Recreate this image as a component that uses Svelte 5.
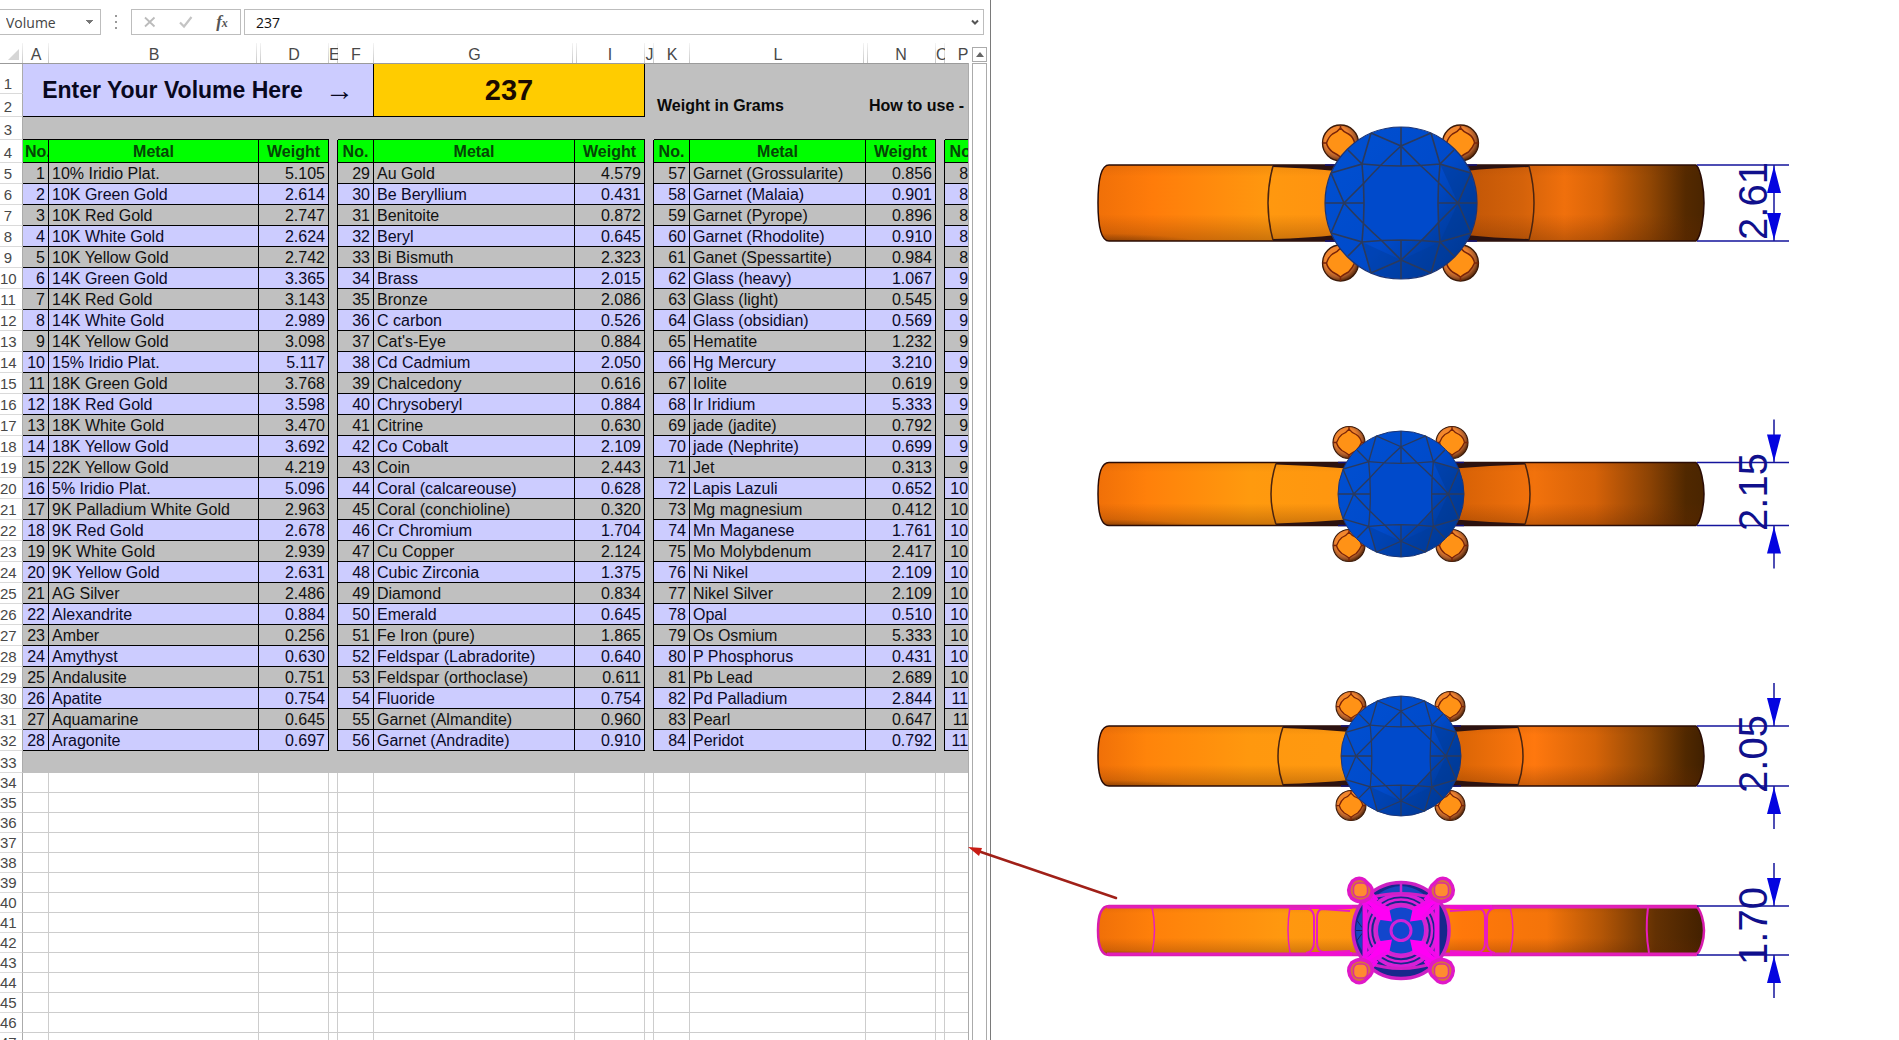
<script lang="ts">
  type Entry = [string, string];

  const firstMetals: Entry[] = [
    ["10% Iridio Plat.", "5.105"], ["10K Green Gold", "2.614"], ["10K Red Gold", "2.747"], ["10K White Gold", "2.624"],
    ["10K Yellow Gold", "2.742"], ["14K Green Gold", "3.365"], ["14K Red Gold", "3.143"], ["14K White Gold", "2.989"],
    ["14K Yellow Gold", "3.098"], ["15% Iridio Plat.", "5.117"], ["18K Green Gold", "3.768"], ["18K Red Gold", "3.598"],
    ["18K White Gold", "3.470"], ["18K Yellow Gold", "3.692"], ["22K Yellow Gold", "4.219"], ["5% Iridio Plat.", "5.096"],
    ["9K Palladium White Gold", "2.963"], ["9K Red Gold", "2.678"], ["9K White Gold", "2.939"], ["9K Yellow Gold", "2.631"],
    ["AG Silver", "2.486"], ["Alexandrite", "0.884"], ["Amber", "0.256"], ["Amythyst", "0.630"],
    ["Andalusite", "0.751"], ["Apatite", "0.754"], ["Aquamarine", "0.645"], ["Aragonite", "0.697"]
  ];
  const secondMetals: Entry[] = [
    ["Au Gold", "4.579"], ["Be Beryllium", "0.431"], ["Benitoite", "0.872"], ["Beryl", "0.645"],
    ["Bi Bismuth", "2.323"], ["Brass", "2.015"], ["Bronze", "2.086"], ["C carbon", "0.526"],
    ["Cat's-Eye", "0.884"], ["Cd Cadmium", "2.050"], ["Chalcedony", "0.616"], ["Chrysoberyl", "0.884"],
    ["Citrine", "0.630"], ["Co Cobalt", "2.109"], ["Coin", "2.443"], ["Coral (calcareouse)", "0.628"],
    ["Coral (conchioline)", "0.320"], ["Cr Chromium", "1.704"], ["Cu Copper", "2.124"], ["Cubic Zirconia", "1.375"],
    ["Diamond", "0.834"], ["Emerald", "0.645"], ["Fe Iron (pure)", "1.865"], ["Feldspar (Labradorite)", "0.640"],
    ["Feldspar (orthoclase)", "0.611"], ["Fluoride", "0.754"], ["Garnet (Almandite)", "0.960"], ["Garnet (Andradite)", "0.910"]
  ];
  const thirdMetals: Entry[] = [
    ["Garnet (Grossularite)", "0.856"], ["Garnet (Malaia)", "0.901"], ["Garnet (Pyrope)", "0.896"], ["Garnet (Rhodolite)", "0.910"],
    ["Ganet (Spessartite)", "0.984"], ["Glass (heavy)", "1.067"], ["Glass (light)", "0.545"], ["Glass (obsidian)", "0.569"],
    ["Hematite", "1.232"], ["Hg Mercury", "3.210"], ["Iolite", "0.619"], ["Ir Iridium", "5.333"],
    ["jade (jadite)", "0.792"], ["jade (Nephrite)", "0.699"], ["Jet", "0.313"], ["Lapis Lazuli", "0.652"],
    ["Mg magnesium", "0.412"], ["Mn Maganese", "1.761"], ["Mo Molybdenum", "2.417"], ["Ni Nikel", "2.109"],
    ["Nikel Silver", "2.109"], ["Opal", "0.510"], ["Os Osmium", "5.333"], ["P Phosphorus", "0.431"],
    ["Pb Lead", "2.689"], ["Pd Palladium", "2.844"], ["Pearl", "0.647"], ["Peridot", "0.792"]
  ];

  const letters = ["A", "B", "D", "E", "F", "G", "I", "J", "K", "L", "N", "O", "P"];
  const beforeHidden = ["B", "G", "L"];
  const afterHidden = ["D", "I", "N"];
  const emptyRows = Array.from({ length: 14 }, (_, i) => 34 + i);

  const cx = 1401;
  const corners = [[-1, -1], [1, -1], [-1, 1], [1, 1]];
  const quarters = [0, 90, 180, 270];

  const rings = [
    { id: "r1", size: "2.61", textY: 201, cy: 203, half: 38, stone: 76, prong: 60, prongR: 18, left: 1273, right: 1529, inward: true },
    { id: "r2", size: "2.15", textY: 492, cy: 494, half: 31.5, stone: 63, prong: 51.5, prongR: 16, left: 1276, right: 1525, inward: false },
    { id: "r3", size: "2.05", textY: 754, cy: 756, half: 30, stone: 60, prong: 49.5, prongR: 15, left: 1283, right: 1518, inward: false },
    { id: "r4", size: "1.70", textY: 926, cy: 930.5, half: 24.5, stone: 49, prong: 41, prongR: 12, left: 1290, right: 1510, inward: false }
  ];
  const solidRings = rings.slice(0, 3);
  const selected = rings[3];

  function bandPath(cy: number, half: number) {
    const t = cy - half;
    const b = cy + half;
    const k = half * 0.7;
    return `M1109 ${t}H1696C1701 ${t + 4} 1704 ${cy - k / 2} 1704 ${cy}S1701 ${b - 4} 1696 ${b}H1109`
      + `C1102 ${b} 1098 ${cy + k} 1098 ${cy}S1102 ${t} 1109 ${t}Z`;
  }
</script>

<main class="screen">
  <section class="workbook" aria-label="Workbook">
    <div class="formula-bar">
      <select class="name-box" aria-label="Name box">
        <option>Volume</option>
      </select>
      <svg class="grip" width="4" height="18" viewBox="0 0 4 18"><path d="M1 2h2v2H1zM1 8h2v2H1zM1 14h2v2H1z" fill="#999" /></svg>
      <div class="actions">
        <button aria-label="Cancel">
          <svg width="14" height="14" viewBox="0 0 14 14"><path d="M2 2.5l9.500 9M11.500 2.500L2 11.500" stroke="#bbb" stroke-width="1.800" fill="none" /></svg>
        </button>
        <button aria-label="Enter">
          <svg width="16" height="14" viewBox="0 0 16 14"><path d="M2 7.500l4 4L13.500 2" stroke="#c4c4c4" stroke-width="2.200" fill="none" /></svg>
        </button>
        <button class="fx" aria-label="Insert function"><i>f<small>x</small></i></button>
      </div>
      <div class="formula">
        <input aria-label="Formula" value="237" />
        <button aria-label="Expand formula bar">
          <svg width="8" height="7" viewBox="0 0 8 7"><path d="M1 1.500l3 3 3-3" stroke="#555" stroke-width="2" fill="none" /></svg>
        </button>
      </div>
    </div>

    <div class="sheet-area">
      <div class="sheet">
        <table>
          <colgroup>
            <col class="w-head" />
            <col class="w-a" /><col class="w-b" /><col class="w-weight" /><col class="w-gap" />
            <col class="w-no" /><col class="w-g" /><col class="w-weight" /><col class="w-gap" />
            <col class="w-no" /><col class="w-l" /><col class="w-weight" /><col class="w-gap" />
            <col class="w-no" />
          </colgroup>
          <thead>
            <tr class="letters">
              <th class="select-all"><svg width="12" height="12" viewBox="0 0 12 12"><path d="M11 0v11H0z" fill="#d6d6d6" /></svg></th>
              {#each letters as letter}
                <th class:before-hidden={beforeHidden.includes(letter)} class:after-hidden={afterHidden.includes(letter)}>{letter}</th>
              {/each}
            </tr>
          </thead>
          <tbody>
            <tr class="r-first">
              <th>1</th>
              <td class="prompt" colspan="5" rowspan="2"><div><span>Enter Your Volume Here</span><span class="arrow">→</span></div></td>
              <td class="volume" colspan="2" rowspan="2">237</td>
              <td class="fill" colspan="6"></td>
            </tr>
            <tr class="r-title">
              <th>2</th>
              <td class="fill"></td>
              <td class="fill note" colspan="2">Weight in Grams</td>
              <td class="fill note" colspan="3">How to use -</td>
            </tr>
            <tr class="r-title">
              <th>3</th>
              {#each letters as letter}
                <td class="fill" class:above-head={!["E", "J", "O"].includes(letter)}></td>
              {/each}
            </tr>
            <tr class="r-title table-head">
              <th>4</th>
              <th>No.</th><th>Metal</th><th>Weight</th><td class="gap"></td>
              <th>No.</th><th>Metal</th><th>Weight</th><td class="gap"></td>
              <th>No.</th><th>Metal</th><th>Weight</th><td class="gap"></td>
              <th>No.</th>
            </tr>
            {#each firstMetals as first, i}
              <tr class="item" class:even={i % 2 == 1}>
                <th>{i + 5}</th>
                <td class="num">{i + 1}</td><td>{first[0]}</td><td class="num">{first[1]}</td><td class="gap"></td>
                <td class="num">{i + 29}</td><td>{secondMetals[i][0]}</td><td class="num">{secondMetals[i][1]}</td><td class="gap"></td>
                <td class="num">{i + 57}</td><td>{thirdMetals[i][0]}</td><td class="num">{thirdMetals[i][1]}</td><td class="gap"></td>
                <td class="num">{i + 85}</td>
              </tr>
            {/each}
            <tr class="r-last">
              <th>33</th>
              <td class="fill" colspan="13"></td>
            </tr>
            {#each emptyRows as row}
              <tr class="blank">
                <th>{row}</th>
                {#each letters as _}<td></td>{/each}
              </tr>
            {/each}
          </tbody>
        </table>
      </div>
      <div class="scrollbar">
        <button aria-label="Scroll up">
          <svg width="8" height="5" viewBox="0 0 8 5"><path d="M0 5l4-5 4 5z" fill="#666" /></svg>
        </button>
        <div class="track"></div>
      </div>
    </div>
  </section>

  <section class="viewport" aria-label="Ring models">
    <svg class="scene" viewBox="991 0 908 1040">
      <defs>
        <linearGradient id="band-r1" gradientUnits="userSpaceOnUse" x1="1098" x2="1704" y1="0" y2="0">
          <stop offset="0" stop-color="#f07008" /><stop offset=".09" stop-color="#ff7c0a" /><stop offset=".28" stop-color="#ff980f" />
          <stop offset=".5" stop-color="#ff8e10" /><stop offset=".6" stop-color="#c05506" /><stop offset=".7" stop-color="#d4620a" />
          <stop offset=".77" stop-color="#f0700c" /><stop offset=".83" stop-color="#d86408" /><stop offset=".91" stop-color="#924704" /><stop offset=".97" stop-color="#542900" /><stop offset="1" stop-color="#4a2500" />
        </linearGradient>
        <linearGradient id="band-r2" gradientUnits="userSpaceOnUse" x1="1098" x2="1704" y1="0" y2="0">
          <stop offset="0" stop-color="#f07008" /><stop offset=".08" stop-color="#ff800a" /><stop offset=".25" stop-color="#ff9a0e" />
          <stop offset=".5" stop-color="#ff9410" /><stop offset=".6" stop-color="#d86206" /><stop offset=".72" stop-color="#f2720c" />
          <stop offset=".82" stop-color="#d66208" /><stop offset=".91" stop-color="#8c4304" /><stop offset=".97" stop-color="#502800" /><stop offset="1" stop-color="#4a2500" />
        </linearGradient>
        <linearGradient id="band-r3" gradientUnits="userSpaceOnUse" x1="1098" x2="1704" y1="0" y2="0">
          <stop offset="0" stop-color="#f07008" /><stop offset=".08" stop-color="#ff840a" /><stop offset=".25" stop-color="#ff980e" />
          <stop offset=".5" stop-color="#ff9a12" /><stop offset=".6" stop-color="#dc6606" /><stop offset=".72" stop-color="#ff780e" />
          <stop offset=".82" stop-color="#d66408" /><stop offset=".91" stop-color="#8c4604" /><stop offset=".97" stop-color="#502800" /><stop offset="1" stop-color="#402000" />
        </linearGradient>
        <linearGradient id="band-r4" gradientUnits="userSpaceOnUse" x1="1098" x2="1704" y1="0" y2="0">
          <stop offset="0" stop-color="#f07008" /><stop offset=".09" stop-color="#ff800a" /><stop offset=".3" stop-color="#ff980f" />
          <stop offset=".5" stop-color="#ff9410" /><stop offset=".6" stop-color="#ff780a" /><stop offset=".74" stop-color="#f4740a" />
          <stop offset=".83" stop-color="#b45606" /><stop offset=".92" stop-color="#633103" /><stop offset="1" stop-color="#422000" />
        </linearGradient>
        <linearGradient id="floor" x1="0" x2="0" y1="0" y2="1">
          <stop offset="0" stop-color="#6a2800" stop-opacity=".1" /><stop offset=".15" stop-color="#6a2800" stop-opacity="0" />
          <stop offset=".65" stop-color="#6a2800" stop-opacity="0" /><stop offset="1" stop-color="#5a2500" stop-opacity=".32" />
        </linearGradient>
        <radialGradient id="heel" cx="0" cy="1.1" r=".2">
          <stop offset="0" stop-color="#301400" stop-opacity=".7" /><stop offset="1" stop-color="#301400" stop-opacity="0" />
        </radialGradient>
        <radialGradient id="prong" cx=".42" cy=".4" r=".62">
          <stop offset="0" stop-color="#ff9a1c" /><stop offset=".55" stop-color="#f08430" /><stop offset=".8" stop-color="#a85a2a" /><stop offset="1" stop-color="#502408" />
        </radialGradient>
        <linearGradient id="gem" x1="0" x2="1" y1=".1" y2=".9">
          <stop offset="0" stop-color="#0050d2" /><stop offset=".55" stop-color="#004aca" /><stop offset=".78" stop-color="#003ea4" /><stop offset="1" stop-color="#00368c" />
        </linearGradient>
      </defs>

      {#each rings as ring}
        <path d={bandPath(ring.cy, ring.half)} fill="url(#band-{ring.id})" />
        <path d={bandPath(ring.cy, ring.half)} fill="url(#floor)" />
        <path d={bandPath(ring.cy, ring.half)} fill="url(#heel)" stroke={ring === selected ? "#d81cae" : "#2a0c06"} stroke-width={ring === selected ? 2.5 : 1.5} />
      {/each}

      {#each solidRings as ring}
        {@const t = ring.cy - ring.half}
        {@const b = ring.cy + ring.half}
        {@const s = ring.stone}
        <!-- dark wedges where the shoulders taper under the stone -->
        <g fill="#2c1210">
          <path d="M{ring.left} {t}H{cx - s * 0.85}V{t + 6}Q{ring.left + 35} {t + 3} {ring.left} {t + 2}Z" />
          <path d="M{ring.left} {b}H{cx - s * 0.85}V{b - 6}Q{ring.left + 35} {b - 3} {ring.left} {b - 2}Z" />
          <path d="M{ring.right} {t}H{cx + s * 0.85}V{t + 6}Q{ring.right - 35} {t + 3} {ring.right} {t + 2}Z" />
          <path d="M{ring.right} {b}H{cx + s * 0.85}V{b - 6}Q{ring.right - 35} {b - 3} {ring.right} {b - 2}Z" />
        </g>
        <g fill="none" stroke="#4a2410" stroke-width="1.5">
          <path d="M{ring.left} {t + 1}Q{ring.left - 10} {ring.cy} {ring.left} {b - 1}" />
          <path d="M{ring.right} {t + 1}Q{ring.right + 10} {ring.cy} {ring.right} {b - 1}" />
        </g>
        <path d="M{cx - s} {t}H{cx + s}M{cx - s} {b}H{cx + s}" stroke="#10107a" stroke-width="1.5" />
        {#each corners as [dx, dy]}
          <g transform="translate({cx - 0.5 + dx * ring.prong} {ring.cy + dy * ring.prong}) scale({ring.prongR / 18})">
            <circle r="18" fill="url(#prong)" stroke="#3c1a08" stroke-width="1.3" />
            <path d="M0-15Q3-11 8-9Q13-6 14 0Q12 5 8 9Q4 11 0 14Q-4 11-8 9Q-13 5-14 0Q-12-6-8-9Q-3-11 0-15Z" fill="#ff9216" stroke="#7a2408" stroke-width="1.5" />
            <path d="M0-18v3M0 18v-4M-18 0h4M18 0h-4" stroke="#7a2408" stroke-width="1.5" />
          </g>
        {/each}
        <g transform="translate({cx} {ring.cy}) scale({s / 76})">
          <circle r="76" fill="url(#gem)" stroke="#1c3474" stroke-width="1.2" />
          <path d="M57 0L39 39L70 30L76 0L70-30L39-39Z" fill="#003a94" opacity=".5" />
          <path d="M0 57L39 39L53 53L30 70L0 76L-30 70L-39 39Z" fill="#003c9c" opacity=".45" />
          <path d="M-37-20L-20-37H20L37-20V20L20 37H-20L-37 20Z" fill="#004acb" />
          <g fill="none" stroke="#2b3a5c" stroke-width="1.6">
            {#each quarters as angle}
              <path transform="rotate({angle})" d="M0-76V-37M0-57Q-22-37-37-20Q-46-11-57 0M-39-39Q0-35 39-39M0-57L-30-70M0-57L30-70M30-70L39-39L70-30M39-39L53-53" />
            {/each}
          </g>
        </g>
      {/each}

      <!-- selected ring -->
      <g fill="none" stroke="#e81cc0" stroke-width="2">
        <path d="M1107 907H1697M1107 954H1697" stroke="#e020b8" stroke-width="3" />
        <path d="M1152 907Q1157 930 1152 953" stroke-width="1.500" />
        <path d="M1290 907Q1286 930 1290 953" stroke-width="1.500" />
        <path d="M1290 909H1308Q1314 910 1314 918V942Q1314 952 1306 953" />
        <path d="M1350 911L1322 909Q1317 910 1317 918V942Q1317 952 1324 952L1350 951" />
        <path d="M1450 911L1480 909Q1485 910 1485 918V942Q1485 952 1478 952L1450 951" />
        <path d="M1510 908H1494Q1487 910 1487 918V942Q1487 952 1495 953" />
        <path d="M1510 907Q1516 930 1510 953" stroke-width="1.500" />
        <path d="M1648 907Q1645 930 1649 953" />
        <path d="M1310 907H1352M1310 954H1352M1450 907H1492M1450 954H1492" stroke="#f010d0" stroke-width="4" />
      </g>
      <g transform="translate({cx} 930.5)">
        <circle r="48" fill="#16288c" stroke="#cc20c4" stroke-width="3.500" />
        <path d="M-22-37Q0-52 22-37L20-33Q0-40-20-33Z" fill="#1746c0" />
        <path d="M-39-20Q-51 0-39 20Z" fill="#1648c0" />
        <path d="M-45 0H-38M-44-10L-39-3M-44 10L-39 3" stroke="#15206c" />
        <g fill="none">
          <circle r="36" stroke="#d820d8" stroke-width="4" />
          <circle r="31" stroke="#e020d8" stroke-width="2.500" />
          <circle r="26" stroke="#d428cc" stroke-width="3.500" />
          <path d="M-36-30V30M36-30V30" stroke="#f010e8" stroke-width="5" />
          <path d="M-34 32Q0 44 34 32M-34-32Q0-42 34-32" stroke="#d020c8" stroke-width="3" />
          <path d="M0-48V-35" stroke="#cc24d0" stroke-width="2.500" />
        </g>
        <circle r="24" fill="#1246cc" stroke="#d022d8" stroke-width="2" />
        <!-- claw bases crossing the rings -->
        {#each corners as [dx, dy]}
          <g transform="scale({dx} {dy})">
            <path d="M9 9L12 23L22 27L34 36L38 30L28 22L24 11Z" fill="#ff00f4" />
            <path d="M14 22L36 34M22 13L38 28M24 30L32 40" stroke="#f408ec" stroke-width="4" />
          </g>
        {/each}
        <circle r="10" fill="#1246d0" stroke="#d022d8" stroke-width="3" />
      </g>
      {#each corners as [dx, dy]}
        <g transform="translate({cx + dx * 40.5} {930.5 + dy * 40.500}) scale({dx} {dy})">
          <path d="M-10 4Q-14-1-9-8Q0-15 9-8Q15 0 8 9Q2 14-4 10Z" fill="#d87040" stroke="#e018c8" stroke-width="3.500" />
          <rect x="-7" y="-7" width="14" height="14" rx="5" fill="#ff8c30" stroke="#d8309c" stroke-width="1.500" />
        </g>
      {/each}

      <!-- dimensions -->
      {#each rings as ring}
        {@const t = ring.cy - ring.half}
        {@const b = ring.cy + ring.half}
        <path d="M1697 {t}H1789M1697 {b}H1789" stroke="#14149c" stroke-width="1.5" />
        {#if ring.inward}
          <path d="M1774 {t}V{b}" stroke="#14149c" stroke-width="1.5" />
          <path d="M1774 {t + 1}L1781 {t + 28}H1767ZM1774 {b - 1}L1781 {b - 28}H1767Z" fill="#0404e0" />
        {:else}
          <path d="M1774 {t - 43}V{t}M1774 {b}V{b + 43}" stroke="#14149c" stroke-width="1.5" />
          <path d="M1774 {t - 1}L1781 {t - 28}H1767ZM1774 {b + 1}L1781 {b + 28}H1767Z" fill="#0404e0" />
        {/if}
        <text class="dimension" transform="translate(1767 {ring.textY}) rotate(-90)">{ring.size}</text>
      {/each}

      <path d="M1116 898L978 851" stroke="#a02018" stroke-width="2.500" stroke-linecap="round" />
      <path d="M968 847L982 848L979 856Z" fill="#c81c14" />
    </svg>
  </section>
</main>

<style>
  :global(body) {
    background: #fff;
    overflow: hidden;
  }
  .screen {
    display: flex;
    height: 100vh;
    overflow: hidden;
    font-family: "Liberation Sans", Arial, sans-serif;
    font-size: 16px;
  }
  .workbook {
    flex: none;
    display: flex;
    flex-direction: column;
    border-right: 1px solid #7a7a7a;
  }
  button {
    display: flex;
    align-items: center;
    justify-content: center;
    border: 0;
    padding: 0;
    background: none;
  }

  .formula-bar {
    display: flex;
    height: 26px;
    padding: 9px 6px 8px 0;
  }
  .name-box, .formula input {
    font: 14px "Open Sans", "Noto Sans", sans-serif;
    color: #444;
  }
  .name-box {
    appearance: none;
    width: 101px;
    border: 1px solid #bdbdbd;
    border-left: 0;
    border-radius: 0;
    padding: 0 6px;
    background-color: #fff;
    background-image: linear-gradient(to bottom left, #777 50%, transparent 50%), linear-gradient(to bottom right, #777 50%, transparent 50%);
    background-size: 4px 4px;
    background-position: 86px 10px, 90px 10px;
    background-repeat: no-repeat;
  }
  .grip {
    margin: 4px 13px;
  }
  .actions {
    display: grid;
    grid-template-columns: repeat(3, 1fr);
    width: 110px;
    border: 1px solid #bdbdbd;
    box-sizing: border-box;
  }
  .fx {
    font: bold 17px "Liberation Serif", serif;
    color: #555;
  }
  .fx small {
    font-size: 12px;
  }
  .formula {
    flex: 1;
    display: flex;
    margin-left: 3px;
    border: 1px solid #bdbdbd;
  }
  .formula input {
    flex: 1;
    border: 0;
    padding: 0 11px;
    color: #111;
  }
  .formula button {
    width: 16px;
  }

  .sheet-area {
    display: flex;
  }
  .sheet {
    width: 968px;
    overflow: hidden;
  }
  table {
    width: 981px;
    table-layout: fixed;
    border-collapse: separate;
    border-spacing: 0;
  }
  .w-head { width: 23px; }
  .w-a { width: 26px; }
  .w-b { width: 210px; }
  .w-weight { width: 70px; }
  .w-gap { width: 9px; }
  .w-no { width: 36px; }
  .w-g { width: 201px; }
  .w-l { width: 176px; }

  th, td {
    box-sizing: border-box;
    padding: 0;
    line-height: 19px;
    vertical-align: bottom;
    white-space: nowrap;
    overflow: hidden;
  }
  th {
    font-weight: normal;
    color: #484848;
  }
  tbody th:first-child {
    padding-right: 6px;
    border-right: 1px solid #ababab;
    border-bottom: 1px solid #dadada;
    font-size: 15px;
    background: #fff;
  }
  .letters {
    height: 21px;
  }
  .letters th {
    border-bottom: 1px solid #9b9b9b;
    line-height: 17px;
    background: linear-gradient(#f4f4f4, #c8c8c8) right / 1px 100% no-repeat;
  }
  .letters .before-hidden {
    background-position: right 2px top;
  }
  .letters .after-hidden {
    background: linear-gradient(#f4f4f4, #c8c8c8) 1px 0 / 1px 100% no-repeat, linear-gradient(#f4f4f4, #c8c8c8) right / 1px 100% no-repeat;
  }
  .letters .select-all {
    text-align: right;
    padding-right: 3px;
  }
  .select-all svg {
    display: block;
    margin: 0 0 2px auto;
  }

  .r-first { height: 30px; }
  .r-title { height: 23px; }
  .item { height: 21px; }
  .r-last { height: 22px; }
  .blank { height: 20px; }

  .fill, .gap {
    background: #c0c0c0;
  }
  .prompt {
    vertical-align: middle;
    border-right: 1px solid #000;
    border-bottom: 1px solid #000;
    background: #ccccff;
    font-size: 23px;
    font-weight: bold;
    color: #080820;
  }
  .prompt div {
    display: flex;
    align-items: center;
    justify-content: center;
    gap: 22px;
  }
  .prompt .arrow {
    font-size: 29px;
    font-weight: normal;
  }
  .volume {
    vertical-align: middle;
    text-align: center;
    border-right: 1px solid #000;
    border-bottom: 1px solid #000;
    background: #ffcc00;
    font-size: 29px;
    font-weight: bold;
    color: #1a0a00;
  }
  .note {
    padding: 0 3px 2px;
    font-weight: bold;
    color: #0a0a0a;
  }
  .above-head {
    border-bottom: 1px solid #000;
  }
  .table-head th:not(:first-child) {
    padding: 0 2px;
    border-right: 1px solid #000;
    border-bottom: 1px solid #000;
    line-height: 21px;
    background: #00ff00;
    font-weight: bold;
    color: #064406;
  }
  .gap {
    border-right: 1px solid #000;
  }
  .item td:not(.gap) {
    padding: 0 3px;
    border-right: 1px solid #000;
    border-bottom: 1px solid #000;
    background: #c0c0c0;
    color: #111;
  }
  .item.even td:not(.gap) {
    background: #ccccff;
    color: #0a0a28;
  }
  .item .num {
    text-align: right;
  }
  .blank td {
    border-right: 1px solid #cdcdcd;
    border-bottom: 1px solid #cdcdcd;
  }

  .scrollbar {
    display: flex;
    flex-direction: column;
    width: 15px;
    margin-right: 3px;
    padding: 4px 0 0 4px;
    background: linear-gradient(#ababab, #ababab) 0 20px / 1px 100% no-repeat;
  }
  .scrollbar button {
    height: 15px;
    border: 1px solid #ababab;
  }
  .track {
    flex: 1;
    margin-top: 1px;
    border: 1px solid #ababab;
  }

  .viewport {
    flex: 1;
    min-width: 0;
  }
  .scene {
    display: block;
    position: relative;
    width: 100%;
    overflow: visible;
  }
  .dimension {
    font-size: 40px;
    fill: #10108c;
    text-anchor: middle;
  }
</style>
